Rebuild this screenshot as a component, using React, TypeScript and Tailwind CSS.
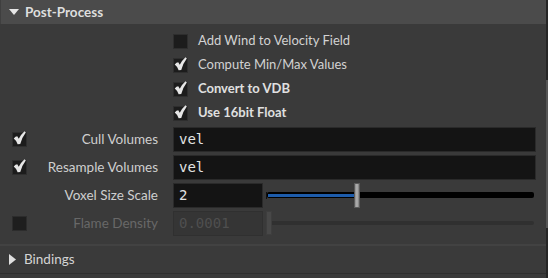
import React from 'react';

const ui = { fontFamily: 'Lato, "Noto Sans", sans-serif' };
const mono = { fontFamily: '"DejaVu Sans Mono", "Liberation Mono", monospace' };

function Check({ on, dim }: { on?: boolean; dim?: boolean }) {
  return (
    <div
      className={`w-[15px] h-[15px] shrink-0 border flex items-center justify-center ${
        dim ? 'bg-[#1e1e1e] border-[#2c2c2c]' : 'bg-[#1c1c1c] border-[#2e2e2e]'
      }`}
    >
      {on && (
        <svg width="14" height="16" viewBox="0 0 14 16" className="-mt-[3px]">
          <path
            d="M0.8 8.6 Q2.6 6.2 4.6 6.2 L6.2 8.8 Q8.6 4.2 12.4 0.8 L13.8 2.2 Q10 7 7.8 14.4 L5 14.6 Q3.8 11 0.8 8.6 Z"
            fill="#e6e6e6"
          />
        </svg>
      )}
    </div>
  );
}

function Field({ value, wide, dim }: { value: string; wide?: boolean; dim?: boolean }) {
  return (
    <div
      className={`h-[25px] flex items-center pl-[5px] text-[14px] border ${
        wide ? 'w-[363px]' : 'w-[90px]'
      } ${dim ? 'bg-[#353535] border-[#303030] text-[#4f4f4f]' : 'bg-[#141414] border-[#2a2a2a] text-[#e2e2e2]'}`}
      style={mono}
    >
      {value}
    </div>
  );
}

function ToggleRow({ label, on, bold }: { label: string; on?: boolean; bold?: boolean }) {
  return (
    <div className="h-[24px] flex items-center pl-[173px] gap-[10px]">
      <Check on={on} />
      <span className={`text-[13px] ${bold ? 'font-bold text-[#e0e0e0]' : 'text-[#d2d2d2]'}`}>{label}</span>
    </div>
  );
}

function ParamRow({
  label,
  check,
  on,
  dim,
  children,
}: {
  label: string;
  check?: boolean;
  on?: boolean;
  dim?: boolean;
  children: React.ReactNode;
}) {
  return (
    <div className="h-[28px] flex items-center">
      <div className="w-[40px] pl-[12px]">{check && <Check on={on} dim={dim} />}</div>
      <div className={`w-[118px] text-right text-[13.5px] ${dim ? 'text-[#686868]' : 'text-[#cfcfcf]'}`}>{label}</div>
      <div className="ml-[15px] flex items-center">{children}</div>
    </div>
  );
}

export default function App() {
  return (
    <div className="w-[548px] h-[278px] bg-[#3a3a3a] flex overflow-hidden" style={ui}>
      <div className="flex-1 flex flex-col">
        {/* Header */}
        <div className="h-[24px] bg-[#4b4b4b] flex items-center pl-[8px] border-l border-[#3f3f3f]">
          <svg width="10" height="8" viewBox="0 0 10 8">
            <path d="M0 1 L10 1 L5 7 Z" fill="#e6e6e6" />
          </svg>
          <span className="ml-[6px] text-[13.5px] font-bold text-[#dedede]">Post-Process</span>
        </div>

        <div className="pt-[5px]">
          <ToggleRow label="Add Wind to Velocity Field" />
          <ToggleRow label="Compute Min/Max Values" on />
          <ToggleRow label="Convert to VDB" on bold />
          <ToggleRow label="Use 16bit Float" on bold />

          <ParamRow label="Cull Volumes" check on>
            <Field value="vel" wide />
          </ParamRow>
          <ParamRow label="Resample Volumes" check on>
            <Field value="vel" wide />
          </ParamRow>
          <ParamRow label="Voxel Size Scale">
            <Field value="2" />
            <div className="ml-[3px] flex items-center w-[270px]">
              <div className="w-[1px] h-[7px] bg-[#111]" />
              <div className="w-[87px] h-[6px] bg-black rounded-l-[2px] flex items-center pl-[1px]">
                <div className="w-full h-[3px] bg-[#1d5cab]" />
              </div>
              <div className="w-[6px] h-[25px] bg-gradient-to-r from-[#8a8a8a] via-[#b4b4b4] to-[#7c7c7c] border border-[#5a5a5a]" />
              <div className="flex-1 h-[6px] bg-black rounded-r-[2px] mr-[2px]" />
            </div>
          </ParamRow>
          <ParamRow label="Flame Density" check dim>
            <Field value="0.0001" dim />
            <div className="ml-[3px] flex items-center w-[270px]">
              <div className="w-[6px] h-[24px] bg-[#484848] border border-[#3e3e3e]" />
              <div className="flex-1 h-[4px] bg-[#303030] rounded-r-[2px] mr-[2px]" />
            </div>
          </ParamRow>
        </div>

        {/* Bindings */}
        <div className="mt-[7px] h-[2px] bg-[#424242]" />
        <div className="h-[28px] flex items-center pl-[9px] border-b border-[#2f2f2f]">
          <svg width="7" height="11" viewBox="0 0 7 11">
            <path d="M0 0 L7 5.5 L0 11 Z" fill="#e0e0e0" />
          </svg>
          <span className="ml-[8px] text-[13.5px] text-[#d4d4d4]">Bindings</span>
        </div>
      </div>

      {/* Scrollbar strip */}
      <div className="w-[2px] flex flex-col">
        <div className="h-[80px] bg-[#262626]" />
        <div className="h-[148px] bg-[#555555]" />
        <div className="flex-1 bg-[#262626]" />
      </div>
    </div>
  );
}
